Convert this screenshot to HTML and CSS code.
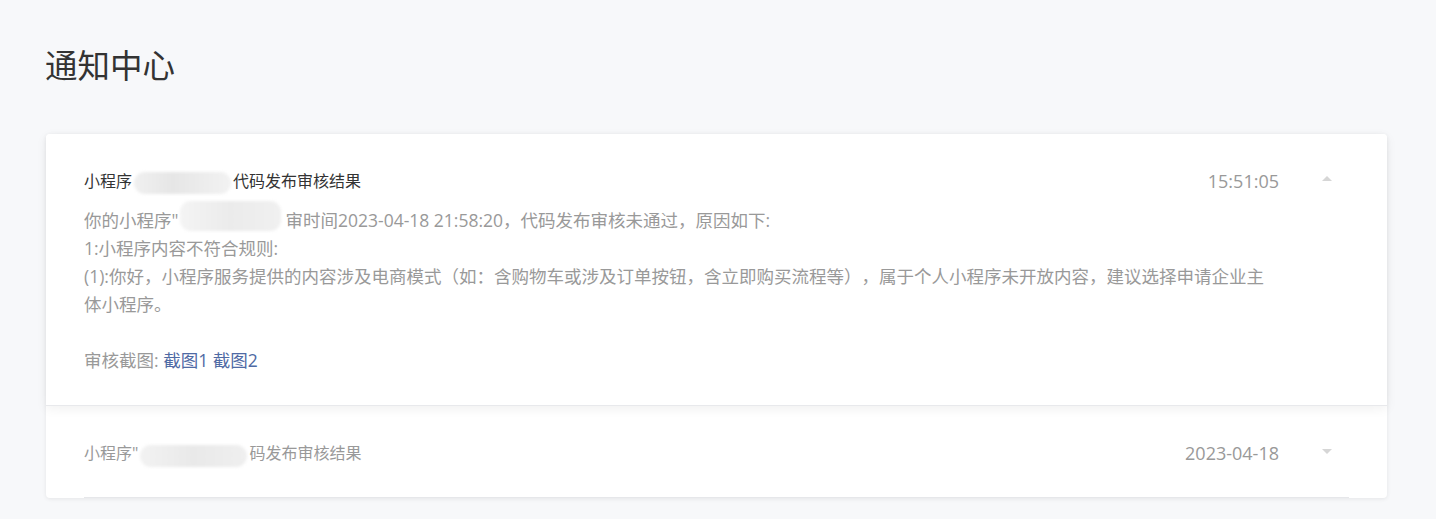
FILE: index.html
```html
<!DOCTYPE html>
<html lang="zh-CN">
<head>
<meta charset="utf-8">
<title>通知中心</title>
<link rel="stylesheet" href="styles.css">
</head>
<body>
<div class="page">
  <h1 class="page-title">通知中心</h1>
  <div class="card">
    <div class="item item-open">
      <div class="item-head">
        <div class="item-title">小程序<span class="blur blur-t1"></span>代码发布审核结果</div>
        <div class="item-time">15:51:05</div>
        <span class="arrow arrow-up"></span>
      </div>
      <div class="item-body">
        <p class="line">你的小程序"<span class="blur blur-c1"></span>审时间2023-04-18 21:58:20，代码发布审核未通过，原因如下:</p>
        <p class="line">1:小程序内容不符合规则:</p>
        <p class="line">(1):你好，小程序服务提供的内容涉及电商模式（如：含购物车或涉及订单按钮，含立即购买流程等），属于个人小程序未开放内容，建议选择申请企业主体小程序。</p>
        <p class="line shots">审核截图: <a class="link" href="#">截图1</a> <a class="link" href="#">截图2</a></p>
      </div>
    </div>
    <div class="item item-closed">
      <div class="item-head">
        <div class="item-title muted">小程序"<span class="blur blur-t2"></span>码发布审核结果</div>
        <div class="item-time">2023-04-18</div>
        <span class="arrow arrow-down"></span>
      </div>
    </div>
  </div>
</div>
</body>
</html>
```

FILE: styles.css
```css
html, body {
  margin: 0;
  padding: 0;
  background: #f7f8fa;
}
body {
  font-family: "Open Sans", "Noto Sans CJK SC", sans-serif;
  color: #333;
  text-spacing-trim: space-all;
}
.page {
  padding: 40px 49px 20px 46px;
}
.page-title {
  margin: 0 0 46px -1px;
  font-family: "Noto Sans CJK SC", sans-serif;
  font-size: 32.5px;
  line-height: 48px;
  font-weight: 400;
  color: #333;
}
.card {
  background: #fff;
  border-radius: 4px;
  box-shadow: 0 1px 4px rgba(0, 0, 0, 0.08);
}
.item {
  position: relative;
  background: #fff;
}
.item-open {
  z-index: 1;
  padding: 33px 38px 31px 38px;
  border-bottom: 1px solid #e8e9ec;
  border-radius: 4px 4px 0 0;
  box-shadow: 0 3px 12px rgba(0, 0, 0, 0.06);
}
.item-closed {
  margin: 0 38px;
  padding: 33px 0 30px 0;
  border-bottom: 1px solid #e6e7ea;
}
.item-head {
  display: flex;
  align-items: center;
  height: 28px;
}
.item-title {
  flex: 1;
  font-size: 16px;
  line-height: 28px;
  color: #333;
  white-space: nowrap;
}
.item-title.muted {
  color: #999;
}
.item-time {
  font-size: 18px;
  line-height: 28px;
  color: #999;
}
.arrow {
  width: 0;
  height: 0;
  margin-left: 43px;
  margin-right: 17px;
  border-left: 5px solid transparent;
  border-right: 5px solid transparent;
}
.arrow-up {
  border-bottom: 5px solid #d6d6d6;
  margin-top: -6px;
}
.arrow-down {
  border-top: 5px solid #d6d6d6;
  margin-top: -4px;
}
.item-body {
  margin-top: 11px;
  padding-right: 75px;
}
.line {
  margin: 0;
  font-size: 17.5px;
  line-height: 28px;
  color: #999;
}
.shots {
  margin-top: 28px;
}
.link {
  color: #4f6aa4;
  text-decoration: none;
}
.blur {
  display: inline-block;
  vertical-align: middle;
  height: 22px;
  border-radius: 11px;
  background: #ececec;
  filter: blur(1.5px);
}
.blur-t1 {
  width: 97px;
  margin: 0 2px;
  background: linear-gradient(90deg, #f0f0f0, #e6e6e6 40%, #ececec 70%, #f2f2f2);
}
.blur-c1 {
  width: 101px;
  height: 30px;
  margin: -12px 4px 0 2px;
  background: linear-gradient(90deg, #f4f4f4, #ebebeb 50%, #f0f0f0);
}
.blur-t2 {
  width: 107px;
  margin: 4px 2px 0 2px;
  background: linear-gradient(90deg, #f2f2f2, #e9e9e9 50%, #efefef);
}
```
